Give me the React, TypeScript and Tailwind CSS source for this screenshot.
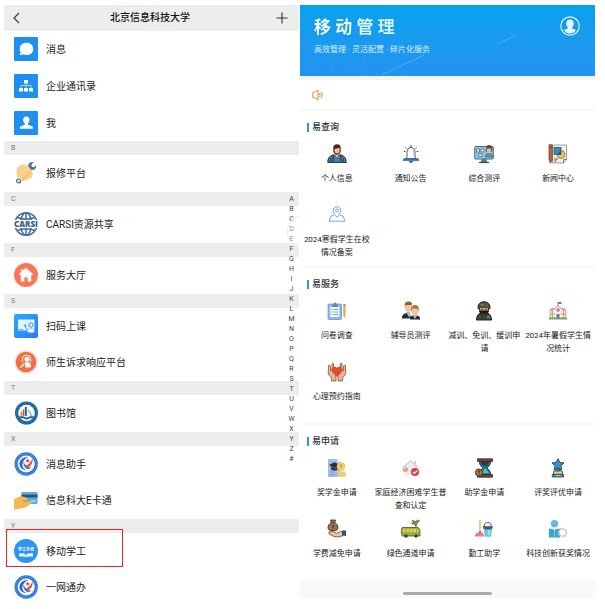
import type { ReactNode } from "react";

interface Entry {
  name: string;
  icon: ReactNode;
  active?: boolean;
}

interface Group {
  letter?: string;
  entries: Entry[];
}

function Tile({ children }: { children: ReactNode }) {
  return (
    <svg viewBox="0 0 24 24" className="size-6">
      <rect width="24" height="24" rx="1" fill="#2090f0" />
      {children}
    </svg>
  );
}

const messageIcon = (
  <Tile>
    <path
      d="M12.500 5.800c4 0 6.700 2.500 6.700 6.100S16.500 18 12.500 18c-1.200 0-2.300-.2-3.200-.7-1.200.7-2.600.9-3.800.8.7-.8 1.100-1.700 1.100-2.700A5.500 5.500 0 0 1 5.700 12c0-3.600 2.800-6.200 6.800-6.200z"
      fill="#fff"
    />
  </Tile>
);

const contactsIcon = (
  <Tile>
    <path d="M10 6h4v3.500h-4zM5 14h4v3.500H5zM10 14h4v3.500h-4zM15 14h4v3.500h-4z" fill="#fff" />
    <path d="M12 9.500V14M7 14v-2.500h10V14" fill="none" stroke="#bfe0fb" strokeWidth="0.8" />
  </Tile>
);

const meIcon = (
  <Tile>
    <path
      d="M12.300 5.500c2 0 3.200 1.300 3.200 3.300 0 1.600-.7 2.900-1.600 3.700v1.200l4 1.500c.7.300 1 .8 1 1.500v1.100H6v-1.100c0-.7.400-1.200 1-1.500l3.800-1.500v-1.200C9.800 11.700 9.200 10.400 9.200 8.800c0-2 1.100-3.300 3.100-3.300z"
      fill="#fff"
    />
  </Tile>
);

const repairIcon = (
  <svg viewBox="0 0 24 24" className="size-6">
    <path d="M17 7L5.500 19.500" stroke="#557f90" strokeWidth="2.500" />
    <path
      d="M19.800 1.200c-2.700-1-5.600.8-5.700 3.600-.1 2.600 2 4.600 4.500 4.300 2.400-.2 4-2.200 3.700-4.600L19.500 6.200l-2-1 .3-2.200z"
      fill="#4d7a8d"
    />
    <circle cx="4.600" cy="20" r="1.900" fill="#fff" stroke="#4d7a8d" strokeWidth="1.400" />
    <path
      d="M4.500 5.500C7 3 11 3.300 14 5.200c1.800 2.200 4.200 3.800 4.700 6.800.3 3-1.200 5.300-3.900 6.200L8.500 20C5.500 18.800 2.800 16.500 2.600 13c-.1-3 .3-5.800 1.900-7.500z"
      fill="#fbd08a"
    />
    <path
      d="M8.800 19.500c-.8-1.700.8-3.200 2.300-2.700-.5-1.900 1.200-3.200 2.800-2.400-.2-2 1.700-3 3.200-2"
      fill="none"
      stroke="#eab65f"
      strokeWidth="0.900"
    />
  </svg>
);

const carsiIcon = (
  <svg viewBox="0 0 24 24" className="size-6 overflow-visible">
    <g fill="none" stroke="#456d9c" strokeWidth="1.500">
      <circle cx="12" cy="12" r="11.200" />
      <ellipse cx="12" cy="12" rx="5.500" ry="11.200" />
      <path d="M12 1v22M3.500 5.500c5 2.200 12 2.200 17 0M3.500 18.500c5-2.200 12-2.200 17 0" />
    </g>
    <rect x="-1" y="8" width="26" height="8" fill="#fff" />
    <text
      x="12"
      y="14.800"
      textAnchor="middle"
      fill="#37618f"
      fontFamily="Open Sans, sans-serif"
      fontSize="8"
      fontWeight="800"
    >
      CARSI
    </text>
  </svg>
);

const hallIcon = (
  <svg viewBox="0 0 24 24" className="size-6">
    <circle cx="12" cy="12" r="12" fill="#fb7659" />
    <path
      d="M12 4.800l7 6.300-1 1.100-.8-.6V18.500h-3.500v-4h-3.400v4H6.800v-6.900l-.8.600-1-1.100 2.500-2.300V6h1.600v1.400z"
      fill="#fff"
    />
  </svg>
);

const scanIcon = (
  <svg viewBox="0 0 24 24" className="size-6">
    <defs>
      <linearGradient id="scan" x1="0" y1="0" x2="1" y2="1">
        <stop offset="0" stopColor="#26aef8" />
        <stop offset="1" stopColor="#287aff" />
      </linearGradient>
    </defs>
    <rect width="24" height="24" rx="2" fill="url(#scan)" />
    <path d="M4 5.500h16.500v11H4z" fill="#e2f2ff" />
    <path d="M10 11l3.500 5M11.500 10v3" stroke="#388ff6" strokeWidth="0.900" />
    <circle cx="17" cy="11" r="2.200" fill="#e2f2ff" stroke="#388ff6" strokeWidth="1" />
    <path d="M13.500 18c.3-2.400 1.700-3.700 3.500-3.700s3.200 1.300 3.500 3.700c-1.500 1-5.500 1-7 0z" fill="#fff" stroke="#5fa9fb" strokeWidth="0.600" />
    <path d="M5 15.500h4" stroke="#388ff6" strokeWidth="0.800" />
  </svg>
);

const appealIcon = (
  <svg viewBox="0 0 24 24" className="size-6">
    <circle cx="12" cy="12" r="11.800" fill="#fae0d4" />
    <circle cx="12" cy="12" r="10.300" fill="#ea7148" />
    <path
      d="M8.500 12V9.500C8.500 7 10.200 5.300 12.700 5.300s4 1.700 4 4.200V12"
      fill="none"
      stroke="#fbd9c9"
      strokeWidth="1.100"
    />
    <circle cx="13" cy="9.300" r="2.500" fill="#fff" />
    <path d="M11.200 12.200h3.800l1.700 1.500v3.800h-5.500z" fill="#fff" />
    <path d="M10.500 13.500l-4 4" stroke="#fff" strokeWidth="1.300" />
  </svg>
);

const libraryIcon = (
  <svg viewBox="0 0 24 24" className="size-6">
    <circle cx="12.500" cy="12" r="11.500" fill="#17639f" />
    <circle cx="12.500" cy="12" r="10" fill="none" stroke="#6fa9d0" strokeWidth="0.600" strokeDasharray="1 1" />
    <circle cx="12.500" cy="12" r="8.300" fill="#fff" />
    <path d="M6.500 11h1.600v4H6.500z" fill="#ef8b2e" />
    <path d="M8.700 8.500h1.500v6.300H8.700z" fill="#d84b3d" />
    <path d="M10.800 6.300l2-.7v9.600l-2-.5z" fill="#1f609a" />
    <path d="M14.500 8l4 7h-1.500l-3-5z" fill="#75b9d9" />
    <path d="M5 15.500c3-.7 5.500 0 7.500 1.200 2-1.200 4.500-1.900 7.500-1.200l-1 2c-2.600-.6-4.600 0-6.500 1.300C10.600 17.500 8.600 16.900 6 17.500z" fill="#1f609a" />
  </svg>
);

function SchoolIcon() {
  return (
    <svg viewBox="0 0 24 24" className="size-6">
      <circle cx="12.200" cy="12" r="11.700" fill="#2a76dd" />
      <circle cx="12.200" cy="12" r="10.200" fill="none" stroke="#7fb0f2" strokeWidth="0.800" strokeDasharray="1.200 1" />
      <circle cx="12.200" cy="12" r="8.500" fill="#fff" />
      <path
        d="M14.500 5C9.500 4.500 5.300 7.500 5.400 12c.1 3.400 3 6 6.800 6.200-2.700-1.300-4-3.300-3.800-5.700C8.600 9 11 6.300 14.500 5z"
        fill="#246bd1"
      />
      <path d="M9.500 9.500c1.200 3.200 3.700 5.400 7.800 6.300-1.500 1.400-3.200 1.700-4.800 1-2.400-1.200-3.500-4.200-3-7.300z" fill="#3b82e0" />
      <path d="M11 14.500c3.600-1.700 6-4.300 7.500-8.300.8 4.500-1.800 8.500-6 9.500z" fill="#e94538" />
      <path d="M11.500 8.500l1.300-.6.800-1.200.8 1.200 1.400.4-1.100 1 .1 1.500-1.300-.7-1.400.5.300-1.300z" fill="#e94538" />
    </svg>
  );
}

const cardIcon = (
  <svg viewBox="0 0 24 24" className="size-6">
    <rect x="7.500" y="4" width="16" height="12" rx="1" fill="#50b2e8" />
    <path d="M7.500 6.500h16v3h-16z" fill="#3a5264" />
    <path d="M17 13h4.500" stroke="#bce8fb" strokeWidth="1.200" />
    <path
      d="M0 11.200l5.500-2.700c2-.7 4.500.2 7 1.500 1.400.9.800 2.500-.7 2.400l-3-.5 1 1.300h6.500c1.700.2 1.700 2 .3 2.700l-4.800 3.300c-1.200.9-3 1-4.800 1L0 21.800z"
      fill="#f7b755"
    />
    <path d="M8.500 11.700l1.500 2h5" fill="none" stroke="#e79a39" strokeWidth="0.800" />
  </svg>
);

const studentWorkIcon = (
  <svg viewBox="0 0 24 24" className="size-6">
    <circle cx="12" cy="12" r="12" fill="#2b95f3" />
    <text
      x="12"
      y="11.500"
      textAnchor="middle"
      fill="#fff"
      fontFamily="Noto Sans CJK SC, sans-serif"
      fontSize="4"
      fontWeight="700"
    >
      学工系统
    </text>
    <path d="M5 14.500c3-.4 5.200 0 7 1.200 1.800-1.200 4-1.600 7-1.200v3c-3-.3-5.200 0-7 1-1.800-1-4-1.300-7-1z" fill="#eef7ff" />
    <path d="M12 15.800v2.500" stroke="#2b95f3" strokeWidth="0.700" />
  </svg>
);

const groups: Group[] = [
  {
    entries: [
      { name: "消息", icon: messageIcon },
      { name: "企业通讯录", icon: contactsIcon },
      { name: "我", icon: meIcon },
    ],
  },
  { letter: "B", entries: [{ name: "报修平台", icon: repairIcon }] },
  { letter: "C", entries: [{ name: "CARSI资源共享", icon: carsiIcon }] },
  { letter: "F", entries: [{ name: "服务大厅", icon: hallIcon }] },
  {
    letter: "S",
    entries: [
      { name: "扫码上课", icon: scanIcon },
      { name: "师生诉求响应平台", icon: appealIcon },
    ],
  },
  { letter: "T", entries: [{ name: "图书馆", icon: libraryIcon }] },
  {
    letter: "X",
    entries: [
      { name: "消息助手", icon: <SchoolIcon /> },
      { name: "信息科大E卡通", icon: cardIcon },
    ],
  },
  {
    letter: "Y",
    entries: [
      { name: "移动学工", icon: studentWorkIcon, active: true },
      { name: "一网通办", icon: <SchoolIcon /> },
    ],
  },
];

const indexLetters = "ABCDEFGHIJKLMNOPQRSTUVWXYZ#".split("");

function Glyph({ children }: { children: ReactNode }) {
  return (
    <svg viewBox="0 0 20 20" className="size-5">
      {children}
    </svg>
  );
}

const services = [
  {
    title: "易查询",
    items: [
      {
        name: "个人信息",
        icon: (
          <Glyph>
            <path d="M.8 18.500c-.2-4 1.500-6.500 5-7.500h8.400c3.500 1 5.200 3.500 5 7.500z" fill="#2f83bd" stroke="#24282e" strokeWidth="0.900" />
            <path d="M5 11l1.800-.8V19H5zM13.200 10.200L15 11v8h-1.800z" fill="#6e3d27" />
            <path d="M7.500 10h5l-2.500 3.500z" fill="#f0b993" />
            <path d="M6.300 3.500C6.500.8 8 .2 10 .2s3.700.8 3.700 3.300v4c-.6 2-1.800 3.200-3.700 3.200S6.900 9.500 6.300 7.500z" fill="#46281f" />
            <path d="M7.500 5c2 0 3.500-.6 4.300-1.400L12.700 5v2c-.3 1.500-1.200 2.400-2.700 2.400S7.800 8.500 7.500 7z" fill="#f0bb97" />
            <path d="M3.500 14v4.500M16.500 14v4.500" stroke="#1f3b56" strokeWidth="0.800" />
          </Glyph>
        ),
      },
      {
        name: "通知公告",
        icon: (
          <Glyph>
            <path d="M10 1v2.500M4.500 3.500l1 1M15.500 3.500l-1 1M2.800 7.500h1.500M17.200 7.500h-1.500" stroke="#30343a" strokeWidth="1" />
            <path d="M5 15l1-2V8.500C6 5.500 7.500 3.500 10 3.500s4 2 4 5V13l1 2z" fill="#fff" stroke="#454a50" strokeWidth="0.900" />
            <path d="M3 14.500h14l1 2H2z" fill="#2f73b3" stroke="#284b70" strokeWidth="0.500" />
            <path d="M8 17h4c0 1.300-.8 2-2 2s-2-.7-2-2z" fill="#2f73b3" />
            <path d="M11.800 6c.8.8 1 2 1 4v3" fill="none" stroke="#a7c9e8" />
          </Glyph>
        ),
      },
      {
        name: "综合测评",
        icon: (
          <Glyph>
            <rect x=".7" y="2.500" width="18.600" height="12.500" rx="1" fill="#8bc5e5" stroke="#476c85" strokeWidth="1" />
            <path d="M7.500 15h5l.8 3H6.700z" fill="#647683" />
            <path d="M5 18.500h10" stroke="#384956" strokeWidth="1.200" />
            <path d="M2.500 5h3v3h-3zM7 5h3v3H7zM4.800 9.500h3v3h-3z" fill="#e6eff4" stroke="#485e6d" strokeWidth="0.700" />
            <path d="M11.500 13c.2-2.300 1.300-3.500 3.500-3.500s3.500 1.200 3.700 3.500z" fill="#54aa9b" stroke="#34474c" strokeWidth="0.600" />
            <path d="M12 3.500C12.500 1.800 13.500 1 15 1c2 0 3.500 1.200 3.300 3.500L17.500 8h-5z" fill="#694039" />
            <path d="M13 4.500h4V7c-.3 1.500-1 2.300-2 2.300S13.300 8.500 13 7z" fill="#edb79b" />
          </Glyph>
        ),
      },
      {
        name: "新闻中心",
        icon: (
          <Glyph>
            <path d="M4.500 1h14v14.500L15.500 19h-11z" fill="#f2f1ef" stroke="#666" strokeWidth="0.600" />
            <path d="M15.500 19v-3.500h3" fill="#ccc" stroke="#454545" strokeWidth="0.600" />
            <path d="M1 .8h3.200v15L2.600 19.300 1 15.800z" fill="#b96c3d" stroke="#533626" strokeWidth="0.700" />
            <path d="M1 3.500h3.200" stroke="#533626" strokeWidth="0.700" />
            <circle cx="13" cy="10.500" r="4" fill="#f5c74c" stroke="#564b34" strokeWidth="0.600" />
            <rect x="6" y="3.500" width="7" height="7" fill="#348dc5" stroke="#294255" strokeWidth="0.700" />
            <path d="M10 10.500c0-2 1-3 3-3v3z" fill="#285c8a" />
            <path d="M6 15h4M6 17h2.500" stroke="#363636" strokeWidth="0.800" />
          </Glyph>
        ),
      },
      {
        name: "2024寒假学生在校情况备案",
        icon: (
          <Glyph>
            <g fill="none" stroke="#58a3c8" strokeWidth="0.900">
              <path d="M10 12.500C7.500 9.500 6.300 7.500 6.300 5.500c0-2.300 1.500-3.700 3.700-3.700s3.700 1.400 3.700 3.700c0 2-1.200 4-3.700 7z" />
              <circle cx="10" cy="5.500" r="1.500" />
              <path d="M7 10.500l-3 .5-2 5.200h16L16 11l-3-.5" />
            </g>
          </Glyph>
        ),
      },
    ],
  },
  {
    title: "易服务",
    items: [
      {
        name: "问卷调查",
        icon: (
          <Glyph>
            <rect x="1" y="3" width="13.500" height="15.500" rx="1" fill="#8db8ed" stroke="#6c95cc" strokeWidth="0.800" />
            <path d="M3.300 5.500h9V16h-9z" fill="#f5fbff" />
            <path d="M5 4h1.300C6.500 2.500 7 1.500 8 1.500s1.500 1 1.700 2.500H11v2H5z" fill="#6284b3" />
            <path d="M6.500 8.500H11M6.500 11H11M6.500 13.500H11" stroke="#679bd4" strokeWidth="0.900" />
            <path d="M4.300 8.500h1.200M4.300 11h1.200M4.300 13.500h1.200" stroke="#44b989" strokeWidth="1.200" />
            <path d="M16.300 4.500h2.200v9.700l-1.100 3-1.100-3z" fill="#eba04a" />
            <path d="M16.300 3h2.200v1.800h-2.200z" fill="#d9695d" />
          </Glyph>
        ),
      },
      {
        name: "辅导员测评",
        icon: (
          <Glyph>
            <path d="M.8 17.500c0-3.500 1.700-5 5.200-5.500h2l3 5.500z" fill="#252b34" />
            <path d="M4.500 10.500h5l-1 6.500z" fill="#83c9e4" />
            <path d="M4 4c0-2 1.300-3.200 3.400-3.200S11 2 11 4v3c-.4 2.300-1.700 3.600-3.500 3.600S4.300 9.200 4 7z" fill="#f4c49a" />
            <path d="M3.800 6V3.500C4.300 1.300 5.700.5 7.500.5 9.700.5 11 1.500 11.200 3.500 8.500 4.500 6 4 5 3.700z" fill="#8b5c32" />
            <path d="M9 18.500c0-2.600 1.200-4 3.800-4.300h2.400c2.700.3 4 1.700 4 4.300z" fill="#222935" />
            <path d="M11.500 14h5L14 18z" fill="#c9a2e9" />
            <path d="M10.500 8.500c0-2.500 1.300-4 3.500-4s3.600 1.500 3.600 4V11c-.5 2.300-1.700 3.500-3.600 3.500s-3.200-1.200-3.500-3.500z" fill="#f4c49a" />
            <path d="M10 11V8.500C10.200 5.700 11.700 4 14 4s4 1.700 4 4.500v2l-1.300-3c-2.300.5-4 .2-5-.4z" fill="#b46d3b" />
          </Glyph>
        ),
      },
      {
        name: "减训、免训、缓训申请",
        icon: (
          <Glyph>
            <path d="M2.500 19c0-4 1.700-6.500 5-7.200h5c3.300.7 5 3.200 5 7.200z" fill="#3a4434" stroke="#1d211e" />
            <path d="M4 6.500C4 2.700 6.300.8 10 .8s6 1.900 6 5.700v1.200H4z" fill="#4c573c" stroke="#20241f" />
            <path d="M5.200 7.500h9.600v3c-.8 2.500-2.500 4-4.800 4s-4-1.500-4.800-4z" fill="#151919" />
            <path d="M6 7h8v2.500H6z" fill="#d69b7b" />
            <circle cx="8" cy="8.300" r=".7" fill="#222" />
            <circle cx="12" cy="8.300" r=".7" fill="#222" />
            <path d="M7 3h2.500v1.200H7zM11.500 4.500H14M5 16h2M13 15h2.500v2H13" fill="#778262" stroke="#778262" strokeWidth="0.500" />
            <path d="M7.500 12l2.500 2 2.500-2" fill="none" stroke="#626a63" strokeWidth="0.800" />
          </Glyph>
        ),
      },
      {
        name: "2024年暑假学生情况统计",
        icon: (
          <Glyph>
            <path d="M2 9.500h16v8H2z" fill="#f7e6bd" stroke="#9d867e" strokeWidth="0.600" />
            <path d="M1 9.500L3.500 7h13L19 9.500z" fill="#ed96c0" />
            <path d="M4.500 9.500L10 4.500l5.500 5V17h-11z" fill="#fff2d2" stroke="#cf87ae" strokeWidth="0.900" />
            <path d="M10 5V1" stroke="#685967" strokeWidth="0.700" />
            <path d="M10 1h3.500v2H10z" fill="#c74f9a" />
            <circle cx="10" cy="9" r="1.500" fill="#91bbe0" stroke="#796e89" strokeWidth="0.600" />
            <path d="M8.500 13h3v4.500h-3z" fill="#4a83bc" />
            <path d="M5.500 12h1.500v2H5.500zM13 12h1.500v2H13zM2.500 12H4v2H2.500zM16 12h1.500v2H16z" fill="#c3b98f" />
            <path d="M1 16.500h6.500v2H1zM12.500 16.500H19v2h-6.500z" fill="#65af62" />
            <path d="M7.500 18h5" stroke="#bd7360" />
          </Glyph>
        ),
      },
      {
        name: "心理预约指南",
        icon: (
          <Glyph>
            <path d="M1.500 3.500c1-1 2-.3 2 1v4L5 6.800V2c.2-1.200 1.500-1.200 1.700 0v7.500L9 12v7H4.500v-3L1.200 12z" fill="#e6b58d" stroke="#6b4a3a" strokeWidth="0.700" />
            <path d="M18.500 3.500c-1-1-2-.3-2 1v4L15 6.800V2c-.2-1.200-1.500-1.200-1.700 0v7.500L11 12v7h4.500v-3l3.300-4z" fill="#e6b58d" stroke="#6b4a3a" strokeWidth="0.700" />
            <path d="M10 14.500L5.500 10c-1.800-2.300 0-5 2.300-5 1 0 1.700.5 2.200 1.200.5-.7 1.200-1.200 2.200-1.200 2.300 0 4.100 2.700 2.300 5z" fill="#e84a2c" stroke="#a8402e" strokeWidth="0.400" />
          </Glyph>
        ),
      },
    ],
  },
  {
    title: "易申请",
    items: [
      {
        name: "奖学金申请",
        icon: (
          <Glyph>
            <path d="M1 1h9l3.500 3.500V19H1z" fill="#a3baf0" />
            <path d="M10 1v3.500h3.500z" fill="#d8e2fb" />
            <path d="M2 7l5.500-2.800L13 7 7.500 10z" fill="#292c36" />
            <path d="M4 8.300v3.200c1.800 1.500 5 1.500 7 0V8.300L7.500 10.200z" fill="#353944" />
            <circle cx="14" cy="8.500" r="4" fill="#f5d36d" stroke="#e1b84f" strokeWidth="0.600" />
            <path d="M14 6v5M12.700 7.200h2.600M12.700 9h2.600" stroke="#c98e31" strokeWidth="0.700" />
            <path d="M10.500 13.500h8v5.500h-8z" fill="#f6d77c" />
            <path d="M10.500 15.300h8M10.500 17.200h8" stroke="#dda94d" strokeWidth="0.600" />
            <path d="M3.500 14h4M3.500 16.500h4" stroke="#6c8ace" strokeWidth="0.800" />
          </Glyph>
        ),
      },
      {
        name: "家庭经济困难学生普查和认定",
        icon: (
          <Glyph>
            <path d="M4 9.500L9.500 5l6 4.500V17H4z" fill="#e9e7f8" />
            <path d="M2 9.500l7.500-6.500 7.500 6.500" fill="none" stroke="#c3c5ea" strokeWidth="1.300" />
            <path d="M13.500 3h1.600v4l-1.600-1.400z" fill="#c3c5ea" />
            <path d="M4 8c2.800 1.500 3.600 3 2.700 4.800C6 14.300 3 14.500 1.900 13c-.9-1.600.2-2.800.9-3.500.2.900.6 1.200 1.100 1.400.6-.9.700-1.800.1-2.900z" fill="#f0a067" />
            <circle cx="14" cy="14" r="4" fill="#db3e48" />
            <path d="M12 14l1.500 1.500 2.700-3" fill="none" stroke="#fff" strokeWidth="1.200" />
          </Glyph>
        ),
      },
      {
        name: "助学金申请",
        icon: (
          <Glyph>
            <path d="M5.500 3.500h11c0 3.500-1.500 5-4 6.500 2.500 1.500 4 3 4 6.500h-11c0-3.500 1.500-5 4-6.500-2.500-1.500-4-3-4-6.500z" fill="#287d94" stroke="#1c303d" />
            <path d="M7 4h8c0 2-1.500 3.500-4 4.800C8.500 7.500 7 6 7 4z" fill="#263e4d" />
            <path d="M11 10l4 5H8z" fill="#56bbce" />
            <path d="M3.500.8h15v2.700h-15zM3.500 16.500h15v2.700h-15z" fill="#71443a" stroke="#3b2926" strokeWidth="0.800" />
            <circle cx="5" cy="14.500" r="3.600" fill="#b07a34" stroke="#4a3426" strokeWidth="1" />
            <path d="M5 12.500v4M4 13.500h2" stroke="#4a3426" strokeWidth="0.900" />
          </Glyph>
        ),
      },
      {
        name: "评奖评优申请",
        icon: (
          <Glyph>
            <path d="M8 10h4v4H8z" fill="#3d7eb4" stroke="#284b69" strokeWidth="0.800" />
            <path d="M10 .7l1.800 3.800 4.200.4-3.100 2.900.9 4.200-3.800-2.100-3.800 2.100.9-4.200L4 4.900l4.200-.4z" fill="#438fcb" stroke="#254c75" strokeWidth="1" />
            <path d="M6 13h8l.8 3.200H5.200z" fill="#f1d56c" stroke="#31506b" strokeWidth="0.900" />
            <path d="M4.300 16.500h11.400V19H4.300z" fill="#447ca9" stroke="#294b69" strokeWidth="0.800" />
            <path d="M7.500 17.500h5" stroke="#f2d872" strokeWidth="0.900" />
          </Glyph>
        ),
      },
      {
        name: "学费减免申请",
        icon: (
          <Glyph>
            <path d="M4.200 3.500L3.500 1h5l-.7 2.500c2.200 1.500 3.200 3 3.200 5 0 1.800-1.200 3-2.800 3H4c-1.800 0-3-1.200-3-3 0-2 1.200-3.500 3.200-5z" fill="#a66e43" stroke="#423a34" strokeWidth="0.900" />
            <path d="M4 3.500h4" stroke="#423a34" />
            <path d="M6 5.500v4M5 6.500h2M5 8h2" stroke="#493323" strokeWidth="0.700" />
            <path d="M2 13l4-.5 3.500 1.700 4-1.700h2.500v4l-4 1.500-5-.5-5-2.500z" fill="#efc2a1" stroke="#584840" strokeWidth="0.800" />
            <path d="M15 11.500h4V17l-4-.5z" fill="#31547b" />
          </Glyph>
        ),
      },
      {
        name: "绿色通道申请",
        icon: (
          <Glyph>
            <path d="M1.500 8.500h15.500c1.200 0 2 3 2 5v3.500H1.500C.6 17 .5 15 .5 12.500s.2-4 1-4z" fill="#87b942" stroke="#465134" strokeWidth="0.800" />
            <path d="M1.500 9.500h16l.5 4H1.500z" fill="#efcf52" stroke="#8a9440" strokeWidth="0.500" />
            <path d="M5 10v3M8.500 10v3M12 10v3M15.500 10v3" stroke="#8d8c3c" strokeWidth="0.700" />
            <circle cx="5" cy="17" r="1.800" fill="#3e4239" />
            <circle cx="15" cy="17" r="1.800" fill="#3e4239" />
            <path d="M11 1l3 1.500L17.500 1l1 .8-2.500 2.500-.7 3-1.200-.2-.3-2.200-2.500.2-.6-.9 1.800-.8z" fill="#9a872f" stroke="#474b28" strokeWidth="0.600" />
            <path d="M10.500 4c-2-.8-4 .2-4.500 2" fill="none" stroke="#999" strokeWidth="0.700" strokeDasharray="1 0.800" />
          </Glyph>
        ),
      },
      {
        name: "勤工助学",
        icon: (
          <Glyph>
            <path d="M6 .8v13" stroke="#f1bb55" strokeWidth="1.400" />
            <path d="M5 12h2.300v2H5z" fill="#bb6369" />
            <path d="M3.800 13.500h4.800l1.800 4H.8c.2-2 1.200-3.500 3-4z" fill="#ed7890" />
            <path d="M10 8c.2-3 1.500-4.500 3.700-4.500S17.200 5 17.500 8" fill="none" stroke="#43525c" strokeWidth="1" />
            <path d="M9.300 7.500h9.200l-1.300 10.200h-6.600z" fill="#69c7db" />
            <path d="M9 7.300h9.800l-.4 2.200c-2.800 1.200-6.300 1.200-9 0z" fill="#465e6c" />
            <path d="M14 11h2.500l-.6 5H14z" fill="#9edfe9" />
          </Glyph>
        ),
      },
      {
        name: "科技创新获奖情况",
        icon: (
          <Glyph>
            <circle cx="6.500" cy="4.800" r="3.700" fill="#62bbd5" />
            <path d="M.8 10c2-.5 4-.2 5.700 1.200C8.200 9.800 10 9.500 12 10v8.500H.8z" fill="#3ba6ce" />
            <path d="M6.500 11v7.500" stroke="#a7dbe9" strokeWidth="0.600" />
            <circle cx="14.500" cy="13.500" r="3.600" fill="#fff" stroke="#bbc4c9" strokeWidth="1" />
            <circle cx="14.500" cy="13.500" r="4.400" fill="none" stroke="#bbc4c9" strokeWidth="1.200" strokeDasharray="1.700 1.700" />
          </Glyph>
        ),
      },
    ],
  },
];

function Directory() {
  return (
    <section className="relative overflow-hidden">
      <header className="flex h-[26px] items-center justify-between bg-[#eceeed] pr-[11px] pl-2 text-[#333]">
        <button type="button" aria-label="返回">
          <svg viewBox="0 0 12 12" className="size-3">
            <path d="M7 1L2 6l5 5" fill="none" stroke="currentColor" strokeWidth="1.100" />
          </svg>
        </button>
        <h1 className="text-[10px] leading-[14px] font-medium text-[#111]">北京信息科技大学</h1>
        <button type="button" aria-label="添加">
          <svg viewBox="0 0 12 12" className="size-3">
            <path d="M6 .5v11M.5 6h11" stroke="currentColor" strokeWidth="1.100" />
          </svg>
        </button>
      </header>

      {groups.map((group, i) => (
        <div key={i}>
          {group.letter && (
            <h2 className="h-[14px] bg-[#eceeed] pl-[7px] text-[7px] leading-[15px] text-[#777]">
              {group.letter}
            </h2>
          )}
          <ul className={group.letter ? "pb-px" : "flex flex-col gap-px"}>
            {group.entries.map((entry) => (
              <li key={entry.name} className="relative">
                <a href="#" className="flex h-9 items-center gap-2 pl-[10px] text-[10px] text-[#222]">
                  {entry.icon}
                  {entry.name}
                </a>
                {entry.active && (
                  <div className="pointer-events-none absolute -top-1 left-[2px] h-[38px] w-[117px] border border-[#f5221a]" />
                )}
              </li>
            ))}
          </ul>
        </div>
      ))}

      <nav aria-label="索引" className="absolute top-[189px] right-1 flex w-[7px] flex-col text-center text-[7px] leading-[10px] text-[#444]">
        {indexLetters.map((letter) => (
          <a key={letter} href="#">
            {letter}
          </a>
        ))}
      </nav>
      <div className="pointer-events-none absolute top-[209px] -right-6 size-9 rounded-full border border-[#e8e8e8] bg-white/40" />
    </section>
  );
}

function Management() {
  return (
    <section>
      <header className="relative h-[71px] bg-linear-to-b from-[#06a2ee] to-[#2492f1] text-white">
        <svg viewBox="0 0 295 71" preserveAspectRatio="none" className="absolute inset-0 size-full">
          <path d="M82 70l42-20M197 39l18-8" stroke="#5dc4f6" strokeWidth="0.600" />
          <path d="M0 68l32-15 33 18M65 45v26M12 71V57h20v14M85 62l25 9" fill="none" stroke="#48aef5" strokeWidth="0.400" opacity=".4" />
        </svg>
        <div className="relative flex items-start justify-between pt-[11px] pr-[15px] pl-[14px]">
          <div>
            <h1 className="bg-linear-to-r from-white to-[#c8eafc] bg-clip-text text-[17px] leading-[22px] font-bold text-transparent">
              移 动 管 理
            </h1>
            <p className="mt-[6px] text-[8px] leading-3 text-[#d5effd]">高效管理 · 灵活配置 · 碎片化服务</p>
          </div>
          <button type="button" aria-label="个人中心">
            <svg viewBox="0 0 20 20" className="size-5">
              <circle cx="10" cy="10" r="9.200" fill="#139ae9" stroke="#d9f2ff" strokeWidth="1.200" />
              <path
                d="M10 3.500c2.400 0 3.800 1.500 3.800 3.900 0 1.800-.7 3.100-1.700 4l.2 1 3.700 1.500c-1.300 2.200-3.500 3.600-6 3.600s-4.700-1.400-6-3.600l3.700-1.500.2-1c-1-.9-1.700-2.200-1.700-4 0-2.400 1.400-3.900 3.800-3.900z"
                fill="#e3f6ff"
              />
            </svg>
          </button>
        </div>
      </header>

      <div className="flex h-[33px] items-center border-t-4 border-[#f3f3f4] pl-3">
        <svg viewBox="0 0 12 12" className="size-3">
          <g fill="none" stroke="#d9913f" strokeWidth="1">
            <path d="M.8 3.200h2L6 1v10L2.800 8.800h-2z" />
            <path d="M7.500 4c.8 1.200.8 2.800 0 4M9 2.800c1.700 2 1.700 4.400 0 6.400" />
          </g>
        </svg>
      </div>

      {services.map((service) => (
        <div key={service.title} className="border-t-2 border-[#f7f7f7] pt-[9px] pb-[7px]">
          <h2 className="flex items-center gap-[3px] pl-[7px] text-[9px] leading-[14px] font-medium text-[#333]">
            <span className="h-[9px] w-[2px] bg-[#2b9bd7]" />
            {service.title}
          </h2>
          <ul className="mt-[10px] grid grid-cols-4 gap-y-[7px]">
            {service.items.map((item) => (
              <li key={item.name}>
                <a href="#" className="flex flex-col items-center gap-2">
                  {item.icon}
                  <span className="min-h-[26px] text-center text-[8px] leading-[13px] text-[#222]">
                    {item.name}
                  </span>
                </a>
              </li>
            ))}
          </ul>
        </div>
      ))}

      <footer className="flex h-[18px] items-center justify-center bg-[#f8f9fa] pt-2">
        <div className="h-[3px] w-[30%] rounded-full bg-[#aaa]" />
      </footer>
    </section>
  );
}

export default function App() {
  return (
    <main className="grid grid-cols-2 items-start gap-px bg-white pt-[5px] pr-[10px] pl-1 font-[Roboto,'Noto_Sans_CJK_SC',sans-serif]">
      <Directory />
      <Management />
    </main>
  );
}
